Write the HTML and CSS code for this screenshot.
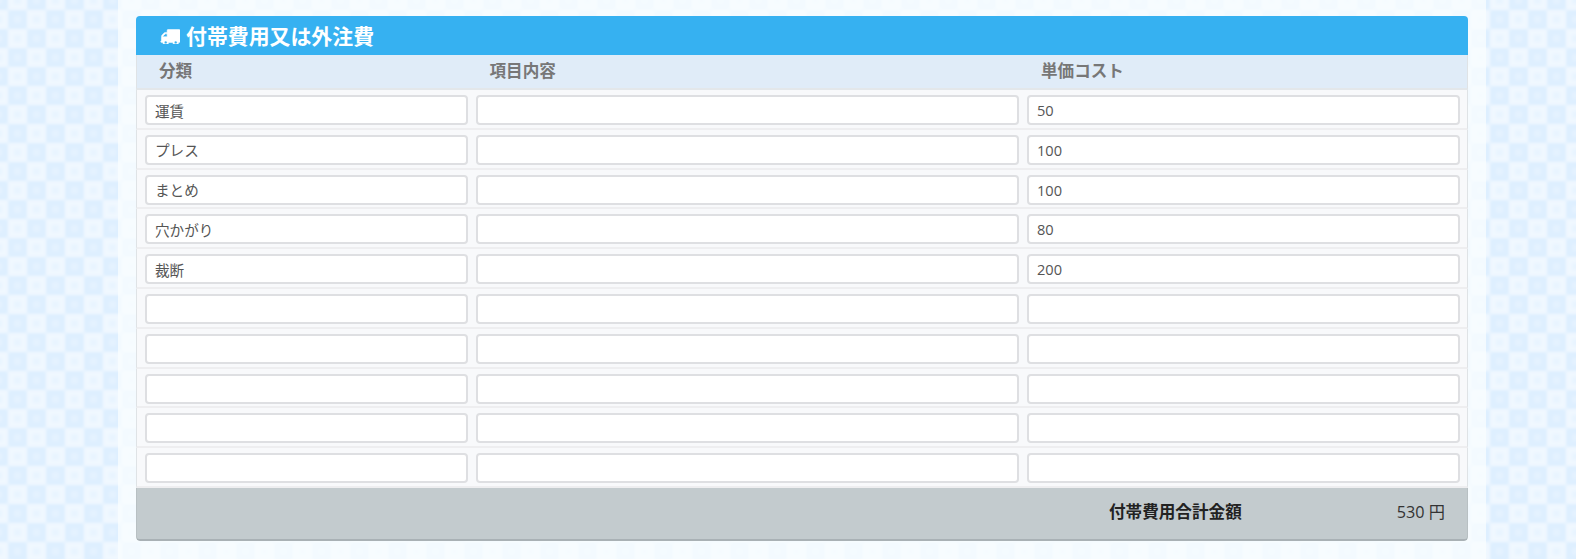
FILE: index.html
```html
<!DOCTYPE html>
<html lang="ja">
<head>
<meta charset="utf-8">
<title>付帯費用又は外注費</title>
<link rel="stylesheet" href="styles.css">
</head>
<body>
<main class="page">
  <section class="panel">
    <h2 class="panel-title">
      <svg class="truck" viewBox="0 128 1792 1408" aria-hidden="true"><path fill="currentColor" stroke="currentColor" stroke-width="50" d="M640 1408q0-52-38-90t-90-38-90 38-38 90 38 90 90 38 90-38 38-90zm-384-512h384v-256h-158q-13 0-22 9l-195 195q-9 9-9 22v30zm1280 512q0-52-38-90t-90-38-90 38-38 90 38 90 90 38 90-38 38-90zm256-1088v1024q0 15-4 26.500t-13.500 18.500-16.500 11.500-23.500 6-22.500 2-25.500 0-22.500-.5q0 106-75 181t-181 75-181-75-75-181h-384q0 106-75 181t-181 75-181-75-75-181h-64q-3 0-22.500.5t-25.500 0-22.500-2-23.500-6-16.500-11.500-13.500-18.500-4-26.500q0-26 19-45t45-19v-320q0-8-.5-35t0-38 2.500-34.500 6.500-37 14-30.500 22.500-30l198-198q19-19 50.500-32t58.500-13h160v-192q0-26 19-45t45-19h1024q26 0 45 19t19 45z"/></svg>
      <span>付帯費用又は外注費</span>
    </h2>
    <div class="row head">
      <div>分類</div><div>項目内容</div><div>単価コスト</div>
    </div>
    <div class="row"><input class="field" value="運賃"><input class="field"><input class="field" value="50"></div>
    <div class="row"><input class="field" value="プレス"><input class="field"><input class="field" value="100"></div>
    <div class="row"><input class="field" value="まとめ"><input class="field"><input class="field" value="100"></div>
    <div class="row"><input class="field" value="穴かがり"><input class="field"><input class="field" value="80"></div>
    <div class="row"><input class="field" value="裁断"><input class="field"><input class="field" value="200"></div>
    <div class="row"><input class="field"><input class="field"><input class="field"></div>
    <div class="row"><input class="field"><input class="field"><input class="field"></div>
    <div class="row"><input class="field"><input class="field"><input class="field"></div>
    <div class="row"><input class="field"><input class="field"><input class="field"></div>
    <div class="row"><input class="field"><input class="field"><input class="field"></div>
    <div class="total">
      <strong class="total-label">付帯費用合計金額</strong>
      <span class="total-value">530 円</span>
    </div>
  </section>
</main>
</body>
</html>
```
FILE: styles.css
```css
* { box-sizing: border-box; }
html, body { margin: 0; height: 559px; overflow: hidden; }
body {
  font-family: "Open Sans", "Noto Sans CJK JP", sans-serif;
  background-color: #eaf5ff;
  background-image: url("data:image/svg+xml,%3Csvg xmlns='http://www.w3.org/2000/svg' width='38' height='38' viewBox='0 0 38 38'%3E%3Cdefs%3E%3Cfilter id='b' x='-10%25' y='-10%25' width='120%25' height='120%25'%3E%3CfeGaussianBlur stdDeviation='1.5'/%3E%3C/filter%3E%3C/defs%3E%3Cg filter='url(%23b)'%3E%3Crect x='-19' y='-19' width='76' height='76' fill='%23f0f8ff'/%3E%3Cg fill='%23deefff'%3E%3Crect x='-19' y='-19' width='19' height='19'/%3E%3Crect x='19' y='-19' width='19' height='19'/%3E%3Crect x='0' y='0' width='19' height='19'/%3E%3Crect x='38' y='0' width='19' height='19'/%3E%3Crect x='-19' y='19' width='19' height='19'/%3E%3Crect x='19' y='19' width='19' height='19'/%3E%3Crect x='0' y='38' width='19' height='19'/%3E%3Crect x='38' y='38' width='19' height='19'/%3E%3C/g%3E%3Cg fill='%23e8f4ff'%3E%3Crect x='6' y='25' width='7' height='7'/%3E%3Crect x='25' y='6' width='7' height='7'/%3E%3C/g%3E%3Cg fill='%23e4f2ff'%3E%3Crect x='6' y='6' width='7' height='7'/%3E%3Crect x='25' y='25' width='7' height='7'/%3E%3C/g%3E%3C/g%3E%3C/svg%3E");
  background-size: 38px 38px;
  background-position: 8px 10px;
}
.page {
  width: 1368px;
  height: 559px;
  margin-left: 118px;
  padding: 16px 18px 0 18px;
  background: rgba(250, 253, 255, 0.75);
}
.panel {
  width: 1332px;
  border-radius: 4px;
  overflow: hidden;
}
.panel-title {
  display: flex;
  align-items: center;
  gap: 6px;
  height: 39px;
  margin: 0;
  padding: 0 0 2px 24px;
  background: #36b1f1;
  color: #fff;
  font-size: 20.9px;
  font-weight: 700;
}
.truck { width: 20px; height: 16px; margin-top: 2px; }
.row {
  display: grid;
  grid-template-columns: 322.5px 543.5px 433px;
  column-gap: 8px;
  height: 39.8px;
  padding: 5px 7px 0 8px;
  background: #f8f9fb;
  border-left: 1px solid #dfe3e6;
  border-right: 1px solid #dfe3e6;
  border-bottom: 2px solid #eeeef0;
}
.head {
  height: 35px;
  padding: 0 7px 3px 8px;
  align-items: center;
  background: #e0ecf8;
  color: #777;
  font-size: 16.6px;
  font-weight: 700;
  border-bottom: 2px solid #e3e7ea;
}
.head > div { padding-left: 14px; }
.field {
  display: block;
  width: 100%;
  height: 30px;
  padding: 0 8px;
  border: 2px solid #dedfe2;
  border-radius: 4px;
  background: #fff;
  color: #555;
  font: 14.6px "Open Sans", "Noto Sans CJK JP", sans-serif;
  outline: none;
}
.total {
  display: flex;
  align-items: center;
  height: 53px;
  padding: 0 0 4px 972px;
  background: #c3cbce;
  color: #222;
  font-size: 16.6px;
  border: 1px solid #b8c0c3;
  border-top: 0;
  border-bottom: 2px solid #a9b1b5;
  border-radius: 0 0 4px 4px;
}
.total-label { font-weight: 700; }
.total-value { margin-left: 155px; color: #333; font-size: 16.2px; }
```
